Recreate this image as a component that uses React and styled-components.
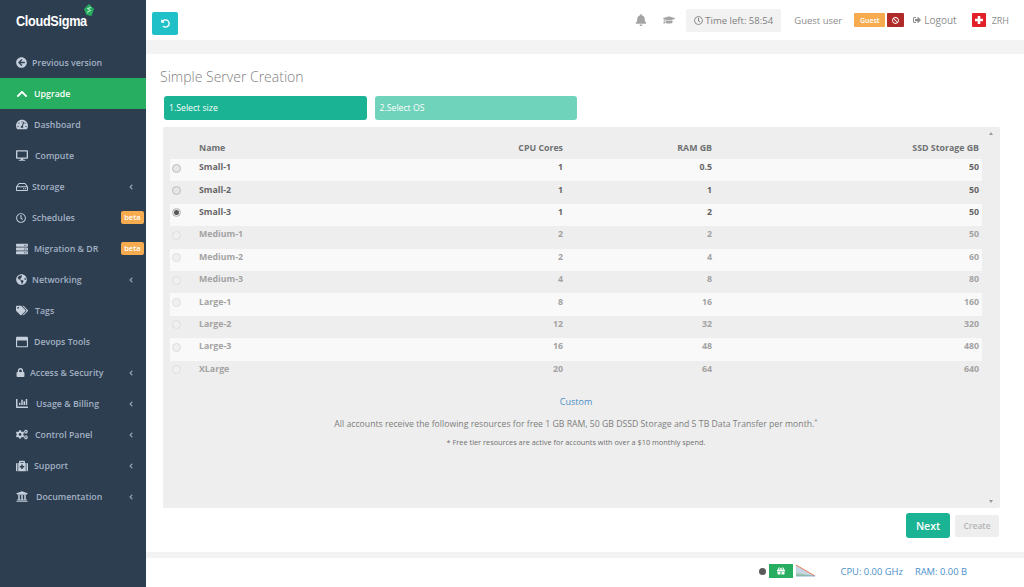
import React from 'react'
import styled, { createGlobalStyle } from 'styled-components'
import {
  FaArrowCircleLeft, FaChevronUp, FaTachometerAlt, FaDesktop, FaRegHdd, FaRegClock, FaServer,
  FaGlobeAmericas, FaTags, FaRegWindowMaximize, FaLock, FaChartBar, FaCogs, FaMedkit, FaUniversity,
  FaBell, FaGraduationCap, FaBan, FaSignOutAlt, FaUndoAlt, FaGift, FaAngleLeft,
} from 'react-icons/fa'

const GlobalStyle = createGlobalStyle`
  html, body {
    margin: 0;
    padding: 0;
    height: 587px;
    overflow: hidden;
    background: #fff;
    font-family: "Open Sans", "Liberation Sans", sans-serif;
  }
  * { box-sizing: border-box; }
`

const Page = styled.div`
  display: flex;
  width: 1024px;
  height: 587px;
`

const Sidebar = styled.aside`
  width: 146px;
  flex: none;
  background: #2d3e50;
`

const LogoRow = styled.div`
  height: 47px;
  padding: 14px 0 0 16px;
  display: flex;
  align-items: flex-start;
`

const LogoText = styled.span`
  display: inline-block;
  font-family: "Liberation Sans", sans-serif;
  font-weight: 700;
  font-size: 15.5px;
  line-height: 14px;
  letter-spacing: -0.4px;
  color: #fff;
  transform: scaleX(0.82);
  transform-origin: left center;
  margin-right: -18px;
`

const LogoMark = styled.svg`
  margin: -10px 0 0 0;
`

const NavItem = styled.div`
  height: 31px;
  display: flex;
  align-items: center;
  padding: 0 2px 0 16px;
  font-size: 8.8px;
  font-weight: 600;
  color: ${p => (p.$active ? '#fff' : '#a3b1c4')};
  background: ${p => (p.$active ? '#27ae60' : 'transparent')};
`

const NavIcon = styled.span`
  display: flex;
  justify-content: flex-start;
  width: 12px;
  font-size: ${p => p.$size}px;
  color: ${p => (p.$active ? '#fff' : '#c5cfdc')};
  flex: none;
`

const NavLabel = styled.span`
  margin-left: ${p => p.$gap}px;
  flex: 1;
  white-space: nowrap;
`

const Caret = styled(FaAngleLeft)`
  font-size: 8px;
  margin-right: 9px;
  color: #8fa0b5;
`

const Beta = styled.span`
  background: #f6ab4e;
  color: #fff;
  font-size: 7.5px;
  font-weight: 600;
  line-height: 13px;
  height: 13px;
  padding: 0 3.5px;
  border-radius: 2px;
`

const Main = styled.main`
  flex: 1;
  display: flex;
  flex-direction: column;
  min-width: 0;
`

const TopBar = styled.header`
  height: 40px;
  flex: none;
  display: flex;
  align-items: center;
  padding: 0 15px 0 6px;
  color: #8d8d8d;
  font-size: 9.5px;
`

const RefreshButton = styled.button`
  width: 26px;
  height: 23px;
  margin-top: 7px;
  border: 0;
  padding: 0;
  border-radius: 2px;
  background: #1fc0c7;
  color: #fff;
  font-size: 9px;
  display: flex;
  align-items: center;
  justify-content: center;
`

const Spacer = styled.div`
  flex: 1;
`

const TopIcon = styled.span`
  display: flex;
  font-size: ${p => p.$size}px;
  color: #a4a4a4;
  margin-right: ${p => p.$right}px;
`

const TimeBox = styled.div`
  height: 23px;
  width: 95px;
  background: #f2f2f2;
  border-radius: 2px;
  display: flex;
  align-items: center;
  justify-content: center;
  gap: 2px;
  margin-right: 13px;
  font-size: 9.5px;
  color: #808080;
  white-space: nowrap;
`

const GuestName = styled.span`
  margin-right: 12px;
  white-space: nowrap;
`

const RoleTag = styled.span`
  height: 14px;
  width: ${p => p.$w}px;
  justify-content: center;
  background: ${p => (p.$danger ? '#b12a2a' : '#f6ab4e')};
  color: #fff;
  font-size: 7px;
  font-weight: 600;
  border-radius: 1px;
  margin-right: ${p => p.$right}px;
  display: flex;
  align-items: center;
`

const LogoutLink = styled.span`
  display: flex;
  align-items: center;
  gap: 3px;
  margin-right: 15px;
  font-size: 10px;
`

const ZoneLabel = styled.span`
  margin-left: 6px;
  font-size: 9px;
`

const Divider = styled.div`
  height: ${p => p.$h}px;
  background: #f3f3f3;
  flex: none;
`

const Content = styled.section`
  flex: 1;
  display: flex;
  flex-direction: column;
  padding: 14px 24px 0 17px;
`

const Title = styled.h1`
  margin: 0 0 10px -3px;
  padding: 0;
  font-size: 14px;
  line-height: 18px;
  font-weight: 300;
  color: #808080;
`

const Steps = styled.div`
  display: flex;
  gap: 8px;
  padding-left: 1px;
  margin-bottom: 7px;
`

const Step = styled.div`
  width: 202.5px;
  height: 24px;
  padding: 0 5px;
  line-height: 24px;
  color: #fff;
  font-size: 8.7px;
  border-radius: 3px;
  background: ${p => (p.$done ? '#1ab394' : '#6fd2ba')};
`

const Panel = styled.div`
  height: 381px;
  flex: none;
  display: flex;
  background: #eee;
  border-radius: 2px;
  padding-left: 7px;
`

const PanelBody = styled.div`
  flex: 1;
  min-width: 0;
`

const Scroll = styled.div`
  width: 18px;
  flex: none;
  display: flex;
  flex-direction: column;
  justify-content: space-between;
  align-items: center;
  padding: 5px 0;
`

const Arrow = styled.span`
  width: 0;
  height: 0;
  border-left: 2.5px solid transparent;
  border-right: 2.5px solid transparent;
  ${p => (p.$up ? 'border-bottom' : 'border-top')}: 3px solid #9a9a9a;
`

const Table = styled.table`
  width: 812px;
  margin-top: 10px;
  border-collapse: collapse;
  table-layout: fixed;
  font-size: 8.8px;
  font-weight: 700;
`

const Col = styled.col`
  width: ${p => p.$w}px;
`

const Th = styled.th`
  height: 22px;
  padding: 0 3px 0 0;
  text-align: ${p => (p.$left ? 'left' : 'right')};
  color: #6f7173;
  font-weight: 700;
`

const Tr = styled.tr`
  height: 22.4px;
  background: ${p => (p.$odd ? '#f9f9f9' : 'transparent')};
  color: ${p => (p.$muted ? '#a3a3a3' : '#666')};
`

const Td = styled.td`
  padding: 0 3px 6px 0;
  text-align: ${p => (p.$left ? 'left' : 'right')};
`

const Radio = styled.span`
  display: block;
  width: 9px;
  height: 9px;
  margin: 2px 0 0 2px;
  border-radius: 50%;
  background: ${p => (p.$muted ? '#f0f0f0' : '#e6e6e6')};
  border: 1px solid ${p => (p.$muted ? '#dedede' : '#bdbdbd')};
  box-shadow: ${p => (p.$on ? 'inset 0 0 0 1px #eee, inset 0 0 0 4px #555' : 'none')};
`

const Notes = styled.div`
  text-align: center;
  padding-top: 12px;
`

const CustomLink = styled.a`
  display: block;
  color: #4a8fc9;
  font-size: 9px;
  line-height: 13px;
`

const NoteMain = styled.p`
  margin: 9.5px 0 0;
  font-size: 8.7px;
  line-height: 14px;
  color: #7d7d7d;
`

const Sup = styled.sup`
  font-size: 6px;
  line-height: 0;
`

const NoteSmall = styled.p`
  margin: 5.5px 0 0;
  font-size: 7.35px;
  line-height: 11px;
  color: #6f6f6f;
`

const Actions = styled.div`
  display: flex;
  justify-content: flex-end;
  align-items: center;
  gap: 5px;
  margin-top: 5px;
  padding-right: 1px;
  height: 25px;
`

const NextButton = styled.button`
  width: 44px;
  height: 25px;
  border: 0;
  padding: 0;
  border-radius: 3px;
  background: #1ab394;
  color: #fff;
  font: 600 10.5px "Open Sans", sans-serif;
`

const CreateButton = styled.button`
  width: 44px;
  height: 22px;
  border: 0;
  padding: 0;
  border-radius: 2px;
  background: #eee;
  color: #b5b5b5;
  font: 600 8.5px "Open Sans", sans-serif;
`

const Footer = styled.footer`
  height: 29px;
  flex: none;
  display: flex;
  align-items: center;
  justify-content: flex-end;
  padding: 0 57px 3px 0;
  color: #4a8fc9;
  font-size: 9.4px;
`

const Dot = styled.span`
  width: 7px;
  height: 7px;
  border-radius: 50%;
  background: #5a5a5a;
  margin-right: 3px;
`

const GiftBox = styled.span`
  width: 24px;
  height: 14px;
  background: #27ae60;
  color: #fff;
  font-size: 8px;
  display: flex;
  align-items: center;
  justify-content: center;
  margin-right: 2px;
`

const Stat = styled.span`
  margin-left: ${p => p.$left}px;
  white-space: nowrap;
`

const nav = [
  { icon: FaArrowCircleLeft, size: 11, label: 'Previous version', gap: 4 },
  { icon: FaChevronUp, size: 12, label: 'Upgrade', gap: 6, active: true },
  { icon: FaTachometerAlt, size: 13, label: 'Dashboard', gap: 6 },
  { icon: FaDesktop, size: 13, label: 'Compute', gap: 7 },
  { icon: FaRegHdd, size: 12, label: 'Storage', gap: 4, caret: true },
  { icon: FaRegClock, size: 10, label: 'Schedules', gap: 4, beta: true },
  { icon: FaServer, size: 12, label: 'Migration & DR', gap: 6, beta: true },
  { icon: FaGlobeAmericas, size: 11, label: 'Networking', gap: 4, caret: true },
  { icon: FaTags, size: 13, label: 'Tags', gap: 7 },
  { icon: FaRegWindowMaximize, size: 12, label: 'Devops Tools', gap: 6 },
  { icon: FaLock, size: 9, label: 'Access & Security', gap: 2, caret: true },
  { icon: FaChartBar, size: 13, label: 'Usage & Billing', gap: 8, caret: true },
  { icon: FaCogs, size: 13, label: 'Control Panel', gap: 7, caret: true },
  { icon: FaMedkit, size: 12, label: 'Support', gap: 6, caret: true },
  { icon: FaUniversity, size: 13, label: 'Documentation', gap: 8, caret: true },
]

const sizes = [
  ['Small-1', 1, 0.5, 50],
  ['Small-2', 1, 1, 50],
  ['Small-3', 1, 2, 50],
  ['Medium-1', 2, 2, 50],
  ['Medium-2', 2, 4, 60],
  ['Medium-3', 4, 8, 80],
  ['Large-1', 8, 16, 160],
  ['Large-2', 12, 32, 320],
  ['Large-3', 16, 48, 480],
  ['XLarge', 20, 64, 640],
]

const Logo = () => (
  <LogoRow>
    <LogoText>CloudSigma</LogoText>
    <LogoMark width="10" height="13" viewBox="0 0 10 13">
      <path d="M5 0 L10 5 L7.5 12 L2.5 11 L0 5 Z" fill="#27ae60" />
      <path d="M7 3.5 L3.5 4.5 L6.5 6.5 L3 8.5" fill="none" stroke="#c9f0d9" strokeWidth="1" />
    </LogoMark>
  </LogoRow>
)

const SwissFlag = () => (
  <svg width="14" height="14" viewBox="0 0 14 14">
    <rect width="14" height="14" rx="1" fill="#e1202a" />
    <path d="M5.7 3h2.6v2.7H11v2.6H8.3V11H5.7V8.3H3V5.7h2.7z" fill="#fff" />
  </svg>
)

const Usage = () => (
  <svg width="21" height="14" viewBox="0 0 21 14">
    <path d="M1 1 L20 12 L1 12 Z" fill="#c6d5e4" />
    <path d="M1 9 L20 12 L1 12 Z" fill="#9fc7a4" />
    <path d="M1 1 L20 12" fill="none" stroke="#ef7d52" strokeWidth="1" />
    <path d="M1 12 L20 12" fill="none" stroke="#6f9fcf" strokeWidth="0.8" />
  </svg>
)

export default function App() {
  return (
    <Page>
      <GlobalStyle />
      <Sidebar>
        <Logo />
        {nav.map(item => {
          const Icon = item.icon
          return (
            <NavItem key={item.label} $active={item.active}>
              <NavIcon $active={item.active} $size={item.size}><Icon /></NavIcon>
              <NavLabel $gap={item.gap}>{item.label}</NavLabel>
              {item.caret && <Caret />}
              {item.beta && <Beta>beta</Beta>}
            </NavItem>
          )
        })}
      </Sidebar>
      <Main>
        <TopBar>
          <RefreshButton aria-label="Back"><FaUndoAlt /></RefreshButton>
          <Spacer />
          <TopIcon $size={12} $right={16}><FaBell /></TopIcon>
          <TopIcon $size={12} $right={11}><FaGraduationCap /></TopIcon>
          <TimeBox><FaRegClock size={9} />Time left: 58:54</TimeBox>
          <GuestName>Guest user</GuestName>
          <RoleTag $w={31} $right={2}>Guest</RoleTag>
          <RoleTag $w={17} $danger $right={9}><FaBan size={7} /></RoleTag>
          <LogoutLink><FaSignOutAlt size={8} />Logout</LogoutLink>
          <SwissFlag />
          <ZoneLabel>ZRH</ZoneLabel>
        </TopBar>
        <Divider $h={14} />
        <Content>
          <Title>Simple Server Creation</Title>
          <Steps>
            <Step $done>1.Select size</Step>
            <Step>2.Select OS</Step>
          </Steps>
          <Panel>
            <PanelBody>
              <Table>
                <colgroup>
                  <Col $w={29} />
                  <Col $w={247} />
                  <Col $w={120} />
                  <Col $w={149} />
                  <Col $w={267} />
                </colgroup>
                <thead>
                  <tr>
                    <Th $left />
                    <Th $left>Name</Th>
                    <Th>CPU Cores</Th>
                    <Th>RAM GB</Th>
                    <Th>SSD Storage GB</Th>
                  </tr>
                </thead>
                <tbody>
                  {sizes.map(([name, cpu, ram, ssd], i) => (
                    <Tr key={name} $odd={i % 2 === 0} $muted={i > 2}>
                      <Td $left><Radio $on={i === 2} $muted={i > 2} /></Td>
                      <Td $left>{name}</Td>
                      <Td>{cpu}</Td>
                      <Td>{ram}</Td>
                      <Td>{ssd}</Td>
                    </Tr>
                  ))}
                </tbody>
              </Table>
              <Notes>
                <CustomLink>Custom</CustomLink>
                <NoteMain>
                  All accounts receive the following resources for free 1 GB RAM, 50 GB DSSD Storage and 5 TB Data Transfer per month.<Sup>*</Sup>
                </NoteMain>
                <NoteSmall>* Free tier resources are active for accounts with over a $10 monthly spend.</NoteSmall>
              </Notes>
            </PanelBody>
            <Scroll><Arrow $up /><Arrow /></Scroll>
          </Panel>
          <Actions>
            <NextButton>Next</NextButton>
            <CreateButton>Create</CreateButton>
          </Actions>
        </Content>
        <Divider $h={6} />
        <Footer>
          <Dot />
          <GiftBox><FaGift /></GiftBox>
          <Usage />
          <Stat $left={25}>CPU: 0.00 GHz</Stat>
          <Stat $left={12}>RAM: 0.00 B</Stat>
        </Footer>
      </Main>
    </Page>
  )
}
